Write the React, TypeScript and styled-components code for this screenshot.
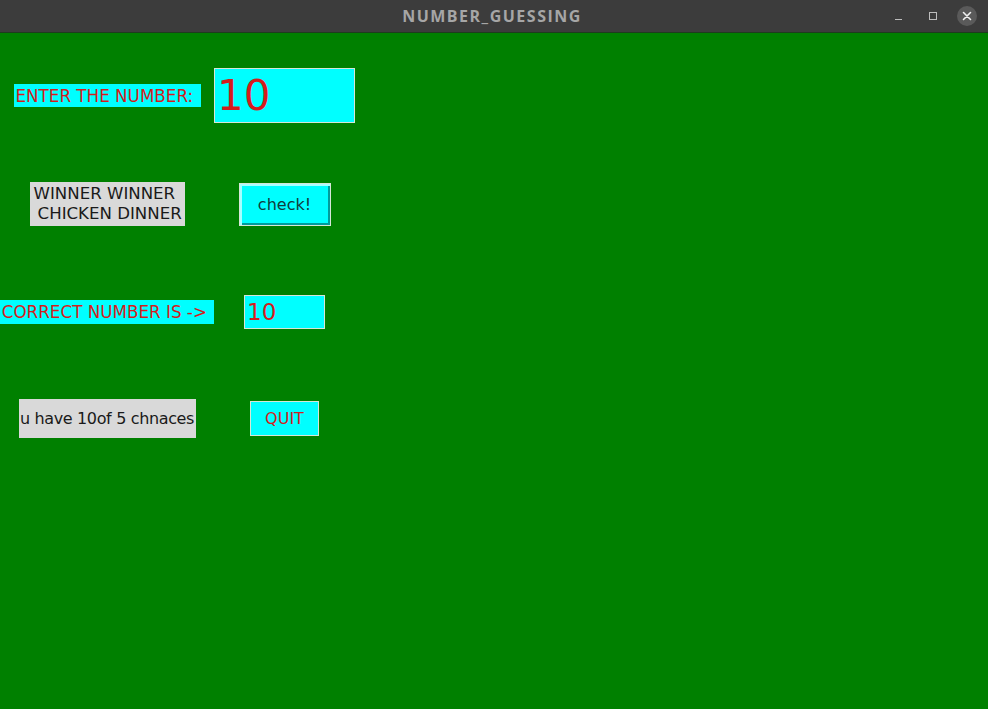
import React from "react";
import styled, { createGlobalStyle } from "styled-components";

const Global = createGlobalStyle`
  html, body { margin: 0; padding: 0; background: #008000; }
  body { width: 988px; height: 709px; overflow: hidden; font-family: "DejaVu Sans", sans-serif; }
  #root { width: 988px; height: 709px; }
`;

const RED = "#d41c1c";

const Window = styled.div`
  display: flex;
  flex-direction: column;
  width: 988px;
  height: 709px;
`;

const TitleBar = styled.div`
  height: 32px;
  flex: none;
  background: #3c3c3c;
  border-bottom: 1px solid #1e3c1e;
  display: grid;
  grid-template-columns: 1fr auto 1fr;
  align-items: center;
`;

const Title = styled.div`
  grid-column: 2;
  color: #a6a6a6;
  font-family: "Open Sans", "Noto Sans", sans-serif;
  font-weight: 700;
  font-size: 16px;
  letter-spacing: 1.5px;
  padding-right: 4px;
`;

const Controls = styled.div`
  grid-column: 3;
  justify-self: end;
  display: flex;
  align-items: center;
  gap: 14px;
  padding-right: 11px;
`;

const CtrlBtn = styled.div`
  width: 20px;
  height: 20px;
  display: flex;
  align-items: center;
  justify-content: center;
`;

const CloseBtn = styled(CtrlBtn)`
  border-radius: 50%;
  background: #5a5a5a;
`;

const Body = styled.div`
  flex: 1;
  background: #008000;
`;

const Grid = styled.div`
  display: grid;
  grid-template-columns: 214px 141px;
  grid-template-rows: 125px 92px 124px 89px;
  place-items: center;
`;

const Label = styled.div<{ $w: number; $h: number; $cyan?: boolean; $size?: number; $track?: number }>`
  width: ${(p) => p.$w}px;
  height: ${(p) => p.$h}px;
  box-sizing: border-box;
  background: ${(p) => (p.$cyan ? "#00ffff" : "#d9d9d9")};
  color: ${(p) => (p.$cyan ? RED : "#1a1a1a")};
  font-size: ${(p) => p.$size ?? 16.75}px;
  letter-spacing: ${(p) => p.$track ?? 0}px;
  line-height: 20px;
  white-space: pre;
  display: flex;
  align-items: center;
  justify-content: center;
  text-align: center;
`;

const Entry = styled.div<{ $w: number; $h: number; $size: number }>`
  width: ${(p) => p.$w}px;
  height: ${(p) => p.$h}px;
  box-sizing: border-box;
  border: 1px solid #d6e6d6;
  background: #00ffff;
  color: ${RED};
  font-size: ${(p) => p.$size}px;
  line-height: 1;
  padding-left: 2px;
  display: flex;
  align-items: center;
`;

const RaisedButton = styled.button`
  width: 92px;
  height: 43px;
  box-sizing: border-box;
  margin: 0;
  padding: 0;
  border: 1px solid #d6e6d6;
  background: #00ffff;
  font-family: "DejaVu Sans", sans-serif;
  font-size: 16px;
  color: #103c3c;
  box-shadow: inset 2px 2px 0 #a8ffff, inset -2px -2px 0 #009c9c;
  cursor: pointer;
`;

const FlatButton = styled.button`
  width: 69px;
  height: 35px;
  box-sizing: border-box;
  margin: 0;
  padding: 0;
  border: 1px solid #d6e6d6;
  background: #00ffff;
  font-family: "DejaVu Sans", sans-serif;
  font-size: 16px;
  color: ${RED};
  cursor: pointer;
`;

export default function App() {
  return (
    <>
      <Global />
      <Window>
        <TitleBar>
          <Title>NUMBER_GUESSING</Title>
          <Controls>
            <CtrlBtn>
              <svg width="10" height="10" viewBox="0 0 10 10">
                <line x1="1" y1="8.5" x2="8" y2="8.5" stroke="#bdbdbd" strokeWidth="1" />
              </svg>
            </CtrlBtn>
            <CtrlBtn>
              <svg width="10" height="10" viewBox="0 0 10 10">
                <rect x="1.5" y="1.5" width="7" height="7" fill="none" stroke="#bdbdbd" strokeWidth="1" />
              </svg>
            </CtrlBtn>
            <CloseBtn>
              <svg width="10" height="10" viewBox="0 0 10 10">
                <path d="M1.5 1.5 L8.5 8.5 M8.5 1.5 L1.5 8.5" stroke="#f0f0f0" strokeWidth="1.6" strokeLinecap="round" />
              </svg>
            </CloseBtn>
          </Controls>
        </TitleBar>
        <Body>
          <Grid>
            <Label $w={187} $h={23} $cyan>{"ENTER THE NUMBER: "}</Label>
            <Entry $w={141} $h={55} $size={42}>10</Entry>
            <Label $w={155} $h={44} $size={16.6}>{"WINNER WINNER \n CHICKEN DINNER"}</Label>
            <RaisedButton>check!</RaisedButton>
            <Label $w={214} $h={24} $cyan>{"CORRECT NUMBER IS -> "}</Label>
            <Entry $w={81} $h={34} $size={23}>10</Entry>
            <Label $w={177} $h={39} $size={16} $track={-0.35}>u have 10of 5 chnaces</Label>
            <FlatButton>QUIT</FlatButton>
          </Grid>
        </Body>
      </Window>
    </>
  );
}
